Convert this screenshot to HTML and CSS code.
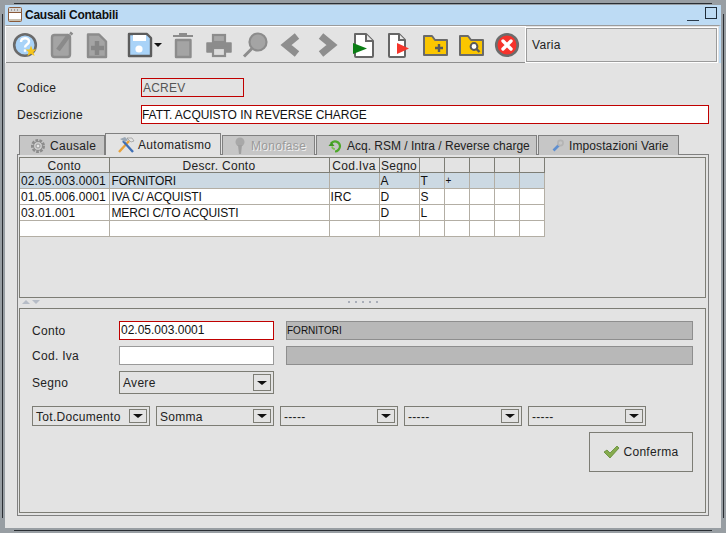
FILE: index.html
```html
<!DOCTYPE html>
<html lang="en">
<head>
    <meta charset="UTF-8">
    <title>Causali Contabili</title>
    <link rel="stylesheet" href="styles.css">
</head>
<body>
<div class="frame">
    <div class="window">
        <div class="titlebar">
            <svg class="title-icon" width="14" height="16" viewBox="0 0 14 16"><rect x="0.5" y="0.5" width="13" height="14" rx="1" fill="#fff" stroke="#8a5a3a"/><rect x="1" y="1" width="12" height="4" fill="#d8d8d8"/><path d="M1 5.5h12" stroke="#8a5a3a"/><path d="M3 3h1M6 3h1M9 3h1" stroke="#666"/><rect x="1" y="12" width="12" height="2" fill="#c8c0b0"/></svg>
            <span class="title-text">Causali Contabili</span>
            <span class="win-min"></span>
            <span class="win-max"></span>
        </div>

        <div class="toolbar">
            <div class="tools">
                <span class="tool">
                    <svg width="28" height="28" viewBox="0 0 28 28"><circle cx="14" cy="14" r="10.8" fill="#a9d3f8" stroke="#6a6a6a" stroke-width="2.6"/><path d="M10 11c0-5 8-5 8-.5 0 3-4 3-4 6" fill="none" stroke="#fff" stroke-width="2.4"/><rect x="12.8" y="18.4" width="2.4" height="2.4" fill="#fff"/><polygon points="20,14.5 21.5,18.5 25.5,18.5 22.4,21 23.6,25 20,22.7 16.4,25 17.6,21 14.5,18.5 18.5,18.5" fill="#f6c51d"/></svg>
                </span>
                <span class="tool">
                    <svg width="28" height="28" viewBox="0 0 28 28"><rect x="5" y="4" width="18" height="22" rx="2.5" fill="#a4a4a4" stroke="#8c8c8c" stroke-width="2.4"/><path d="M11 19l11-15" stroke="#8a8a8a" stroke-width="4.5"/><path d="M23 1.5l2.5 2" stroke="#8a8a8a" stroke-width="2.5"/></svg>
                </span>
                <span class="tool">
                    <svg width="28" height="28" viewBox="0 0 28 28"><path d="M5 3.500h11l7 7v15.500H5z" fill="#a4a4a4" stroke="#8c8c8c" stroke-width="2.4" stroke-linejoin="round"/><path d="M14 10v14M8 17h13" stroke="#868686" stroke-width="4.5"/></svg>
                </span>
                <span class="tool tool-save">
                    <svg width="26" height="26" viewBox="0 0 26 26"><path d="M2 2h18l4 4v18H2z" fill="#a9d3f8" stroke="#5c5c5c" stroke-width="2.4" stroke-linejoin="round"/><rect x="6" y="3" width="13" height="6" fill="#fff"/><circle cx="12" cy="17" r="3.6" fill="#fff"/></svg>
                    <span class="save-caret"></span>
                </span>
                <span class="tool">
                    <svg width="28" height="28" viewBox="0 0 28 28"><path d="M4 5h20" stroke="#8c8c8c" stroke-width="2"/><path d="M10 3.500h8" stroke="#8c8c8c" stroke-width="3"/><path d="M7 9h14.500v17H7z" fill="#a4a4a4" stroke="#8c8c8c" stroke-width="2.4" stroke-linejoin="round"/></svg>
                </span>
                <span class="tool">
                    <svg width="28" height="28" viewBox="0 0 28 28"><rect x="8" y="4" width="12" height="7" fill="#a8a8a8" stroke="#8c8c8c" stroke-width="2.2"/><path d="M2 12h24v9H2z" fill="#8c8c8c" stroke="#8c8c8c" stroke-width="1.5" stroke-linejoin="round"/><rect x="8" y="17" width="12" height="8" fill="#dcdcdc" stroke="#8c8c8c" stroke-width="2.2"/></svg>
                </span>
                <span class="tool">
                    <svg width="28" height="28" viewBox="0 0 28 28"><circle cx="17" cy="11" r="8.5" fill="#a4a4a4" stroke="#8c8c8c" stroke-width="2.2"/><path d="M11 17.500L3 25.500" stroke="#8c8c8c" stroke-width="3"/></svg>
                </span>
                <span class="tool">
                    <svg width="28" height="28" viewBox="0 0 28 28"><path d="M20 5L9 14l11 9" fill="none" stroke="#8e8e8e" stroke-width="7"/></svg>
                </span>
                <span class="tool">
                    <svg width="28" height="28" viewBox="0 0 28 28"><path d="M8 5l11 9-11 9" fill="none" stroke="#8e8e8e" stroke-width="7"/></svg>
                </span>
                <span class="tool">
                    <svg width="28" height="28" viewBox="0 0 28 28"><path d="M6 3h11l7 7v15a1 1 0 0 1-1 1H7a1 1 0 0 1-1-1z" fill="#fff" stroke="#666" stroke-width="2" stroke-linejoin="round"/><path d="M17 3v7h7" fill="#e8e8e8" stroke="#666" stroke-width="2"/><polygon points="4,12 18,17.500 4,23" fill="#0a7d14"/></svg>
                </span>
                <span class="tool">
                    <svg width="28" height="28" viewBox="0 0 28 28"><path d="M4 3h10l6 6v16a1 1 0 0 1-1 1H5a1 1 0 0 1-1-1z" fill="#fff" stroke="#666" stroke-width="2" stroke-linejoin="round"/><path d="M14 3v6h6" fill="#e8e8e8" stroke="#666" stroke-width="2"/><polygon points="12,12 24,17.500 12,23" fill="#f5352b"/></svg>
                </span>
                <span class="tool">
                    <svg width="28" height="28" viewBox="0 0 28 28"><path d="M3 5h8l3 4h12v15H3z" fill="#fbc600" stroke="#6a6a6a" stroke-width="2" stroke-linejoin="round"/><path d="M18 13v8M14 17h8" stroke="#5a5a5a" stroke-width="2.4"/></svg>
                </span>
                <span class="tool">
                    <svg width="28" height="28" viewBox="0 0 28 28"><path d="M3 5h8l3 4h12v15H3z" fill="#fbc600" stroke="#6a6a6a" stroke-width="2" stroke-linejoin="round"/><circle cx="17" cy="15.500" r="3.4" fill="#fff" stroke="#5a5a5a" stroke-width="2"/><path d="M19.500 18l3 3" stroke="#5a5a5a" stroke-width="2.4"/></svg>
                </span>
                <span class="tool">
                    <svg width="28" height="28" viewBox="0 0 28 28"><circle cx="14" cy="14" r="10.8" fill="#f6332b" stroke="#6c6c6c" stroke-width="2.6"/><path d="M10 10l8 8M18 10l-8 8" stroke="#fff" stroke-width="3.4" stroke-linecap="round"/></svg>
                </span>
            </div>
            <div class="status-box">Varia</div>
        </div>

        <div class="form">
            <div class="form-row">
                <label class="form-label">Codice</label>
                <div class="field field-code">ACREV</div>
            </div>
            <div class="form-row">
                <label class="form-label">Descrizione</label>
                <div class="field field-desc">FATT. ACQUISTO IN REVERSE CHARGE</div>
            </div>

            <div class="tabs">
                <div class="tab tab-causale">
                    <svg width="16" height="16" viewBox="0 0 16 16"><circle cx="8" cy="8" r="5.500" fill="none" stroke="#8c8c8c" stroke-width="3" stroke-dasharray="2.6 1.2"/><circle cx="8" cy="8" r="4.500" fill="#ccc" stroke="#8c8c8c"/><circle cx="8" cy="8" r="2" fill="#e8e8e8" stroke="#999"/></svg>
                    Causale
                </div>
                <div class="tab tab-active tab-auto">
                    <svg width="18" height="18" viewBox="0 0 18 18"><path d="M2 16L12 5" stroke="#e8a23a" stroke-width="2.4"/><path d="M16 16L6 5" stroke="#3f6fb5" stroke-width="2.4"/><path d="M3 3l5-2 3 3-3 2z" fill="#9aa7b5"/><path d="M10 2h5l2 3-3 1z" fill="#e4e4e4" stroke="#888" stroke-width=".6"/></svg>
                    Automatismo
                </div>
                <div class="tab tab-disabled tab-mono">
                    <svg width="14" height="18" viewBox="0 0 14 18"><circle cx="7" cy="5" r="4.500" fill="#a8a8a8"/><path d="M5 8h4l-1 9H6z" fill="#a0a0a0"/></svg>
                    Monofase
                </div>
                <div class="tab tab-acq">
                    <svg width="14" height="14" viewBox="0 0 14 14"><path d="M3 4.500A5 5 0 0 1 12 7c0 3-2.500 5.500-5 5.500" fill="none" stroke="#4ea82a" stroke-width="2.2"/><path d="M4 7.500a3 3 0 0 0 3 2.500" fill="none" stroke="#7cc24f" stroke-width="1.6"/><path d="M0.500 7h6L3.500 3z" fill="#3d9a20"/></svg>
                    Acq. RSM / Intra / Reverse charge
                </div>
                <div class="tab tab-imp">
                    <svg width="12" height="13" viewBox="0 0 12 13"><path d="M1.500 11.500L7 6" stroke="#5f8fd0" stroke-width="2.6"/><circle cx="8.500" cy="4" r="2.6" fill="none" stroke="#b4b4b4" stroke-width="1.6"/></svg>
                    Impostazioni Varie
                </div>
            </div>

            <div class="tab-panel">
                <div class="pane-top">
                    <table class="grid">
                        <colgroup>
                            <col class="c-conto"><col class="c-descr"><col class="c-iva"><col class="c-segno">
                            <col class="c-small"><col class="c-small"><col class="c-small"><col class="c-small"><col class="c-small">
                        </colgroup>
                        <thead>
                            <tr><th>Conto</th><th>Descr. Conto</th><th>Cod.Iva</th><th>Segno</th><th></th><th></th><th></th><th></th><th></th></tr>
                        </thead>
                        <tbody>
                            <tr class="selected"><td>02.05.003.0001</td><td>FORNITORI</td><td></td><td>A</td><td>T</td><td class="plus">+</td><td></td><td></td><td></td></tr>
                            <tr><td>01.05.006.0001</td><td>IVA C/ ACQUISTI</td><td>IRC</td><td>D</td><td>S</td><td></td><td></td><td></td><td></td></tr>
                            <tr><td>03.01.001</td><td>MERCI C/TO ACQUISTI</td><td></td><td>D</td><td>L</td><td></td><td></td><td></td><td></td></tr>
                            <tr><td></td><td></td><td></td><td></td><td></td><td></td><td></td><td></td><td></td></tr>
                        </tbody>
                    </table>
                </div>

                <div class="splitter">
                    <span class="split-arrows"><span class="arrow-up"></span><span class="arrow-down"></span></span>
                    <span class="split-dots"></span>
                </div>

                <div class="pane-bottom">
                    <div class="detail">
                        <label class="form-label">Conto</label>
                        <div class="field field-conto">02.05.003.0001</div>
                        <div class="field field-readonly">FORNITORI</div>

                        <label class="form-label">Cod. Iva</label>
                        <div class="field field-plain"></div>
                        <div class="field field-readonly"></div>

                        <label class="form-label">Segno</label>
                        <div class="combo combo-tall">Avere<span class="combo-btn"></span></div>
                    </div>

                    <div class="combo-row">
                        <div class="combo">Tot.Documento<span class="combo-btn"></span></div>
                        <div class="combo">Somma<span class="combo-btn"></span></div>
                        <div class="combo">-----<span class="combo-btn"></span></div>
                        <div class="combo">-----<span class="combo-btn"></span></div>
                        <div class="combo">-----<span class="combo-btn"></span></div>
                    </div>

                    <div class="actions">
                        <button class="btn-confirm">
                            <svg width="17" height="14" viewBox="0 0 17 14"><path d="M1 7l3-2 3 3 7-7 2 2-9 10z" fill="#86ab4e" stroke="#5f8a34" stroke-width=".8" stroke-linejoin="round"/></svg>
                            Conferma
                        </button>
                    </div>
                </div>
            </div>
        </div>
    </div>
</div>
</body>
</html>
```

FILE: styles.css
```css
* {
    margin: 0;
    padding: 0;
    box-sizing: border-box;
}

html, body {
    width: 726px;
    height: 533px;
    overflow: hidden;
}

body {
    font-family: "Liberation Sans", Arial, sans-serif;
    font-size: 12px;
    letter-spacing: 0.3px;
    color: #222;
}

.frame {
    width: 726px;
    height: 533px;
    padding: 5px;
    background-color: #989ea3;
    background-image:
        linear-gradient(#2a2e33, #2a2e33),
        linear-gradient(#2a2e33, #2a2e33),
        linear-gradient(#2a2e33, #2a2e33),
        linear-gradient(#2a2e33, #2a2e33);
    background-repeat: no-repeat;
    background-size: 698px 1px, 698px 1px, 1px 504px, 1px 504px;
    background-position: 14px 3px, 14px 530px, 2px 14px, 723px 14px;
}

.window {
    height: 100%;
    display: flex;
    flex-direction: column;
    background: #e3e3e3;
}

.titlebar {
    height: 20px;
    flex: none;
    background: #bddbf4;
    display: flex;
    align-items: center;
    padding: 0 4px 0 3px;
}

.title-icon {
    margin-right: 3px;
    flex: none;
}

.title-text {
    font-weight: bold;
    letter-spacing: -0.25px;
    color: #111;
    flex: 1;
}

.win-min {
    width: 12px;
    height: 1px;
    background: #2a3a4a;
    margin: 10px 6px 0 0;
}

.win-max {
    width: 12px;
    height: 12px;
    border: 1px solid #1f2d3a;
    margin-bottom: 5px;
}

.toolbar {
    height: 38px;
    flex: none;
    display: flex;
    border-top: 1px solid #9b9b9b;
    border-left: 1px solid #fff;
    border-right: 2px solid #bddbf4;
}

.tools {
    flex: 1;
    display: flex;
    align-items: center;
    padding-left: 1px;
    border-top: 1px solid #fff;
    border-bottom: 1px solid #8f8f8f;
}

.tool {
    width: 36px;
    height: 30px;
    flex: none;
    display: flex;
    align-items: center;
    justify-content: center;
}

.tool-save {
    width: 50px;
    justify-content: flex-start;
    padding-left: 12px;
}

.save-caret {
    width: 0;
    height: 0;
    margin-left: 1px;
    border-left: 4px solid transparent;
    border-right: 4px solid transparent;
    border-top: 4px solid #111;
}

.status-box {
    width: 191px;
    height: 34px;
    flex: none;
    background: #e3e3e3;
    border: 1px solid #9b9b9b;
    outline: 1px solid #fff;
    margin: 2px 2px 0 0;
    padding: 9px 0 0 5px;
}

.form {
    flex: 1;
    padding: 15px 0 0 12px;
}

.form-row {
    display: flex;
    align-items: center;
    height: 19px;
    margin-bottom: 8px;
}

.form-row .form-label {
    width: 124px;
}

.field {
    height: 19px;
    line-height: 17px;
    padding-left: 1px;
    letter-spacing: 0;
    border: 1px solid #c00000;
}

.field-code {
    width: 103px;
    color: #555;
    letter-spacing: 0.2px;
    padding-top: 1px;
}

.field-desc {
    width: 568px;
    background: #fff;
    color: #111;
    padding: 1px 0 0;
    letter-spacing: -0.05px;
}

.tabs {
    height: 22px;
    margin-top: 9px;
    margin-bottom: -1px;
    padding-left: 2px;
    display: flex;
    align-items: flex-end;
    position: relative;
}

.tab {
    height: 20px;
    display: flex;
    align-items: center;
    gap: 4px;
    background: #c6c6c6;
    border: 1px solid #808080;
    border-bottom: none;
    padding-left: 10px;
    margin-right: 1px;
    white-space: nowrap;
}

.tab-active {
    height: 22px;
    background: #e3e3e3;
    position: relative;
}

.tab-disabled {
    color: #9a9a9a;
    text-shadow: 1px 1px 0 #f2f2f2;
}

.tab-causale { width: 86px; margin-right: 0; }
.tab-auto { width: 116px; padding-left: 11px; gap: 3px; }
.tab-mono { width: 93px; }
.tab-acq { width: 221px; padding-left: 11px; gap: 5px; letter-spacing: 0; }
.tab-imp { width: 141px; padding-left: 13px; gap: 5px; letter-spacing: 0.1px; }

.tab-panel {
    width: 692px;
    height: 362px;
    border: 1px solid #808080;
    padding: 2px 2px 2px 1px;
    display: flex;
    flex-direction: column;
}

.pane-top {
    height: 141px;
    flex: none;
    border: 1px solid #7d7d75;
}

.grid {
    border-collapse: collapse;
    table-layout: fixed;
    width: 524px;
    color: #111;
    letter-spacing: 0.1px;
}

.c-conto { width: 89px; }
.c-descr { width: 220px; }
.c-iva { width: 50px; }
.c-segno { width: 40px; }
.c-small { width: 25px; }

.grid th {
    height: 14px;
    font-weight: normal;
    text-align: center;
    background: #e3e3e3;
    border-right: 1px solid #7d7d75;
    border-bottom: 1px solid #7d7d75;
    letter-spacing: 0.3px;
    color: #222;
    overflow: hidden;
    white-space: nowrap;
    padding-top: 2px;
    line-height: 12px;
}

.grid td {
    height: 16px;
    background: #fff;
    border-right: 1px solid #b3aea4;
    border-bottom: 1px solid #b3aea4;
    padding: 1px 0 0 1px;
    overflow: hidden;
    white-space: nowrap;
    line-height: 14px;
}

.grid td:nth-child(2) {
    padding-left: 2px;
    letter-spacing: -0.15px;
}

.grid .selected td {
    background: #ccd9e3;
}

.grid .plus {
    font-size: 10px;
}

.splitter {
    height: 10px;
    flex: none;
    display: flex;
    justify-content: space-between;
    padding: 2px 0 0 3px;
}

.split-arrows {
    display: flex;
    gap: 2px;
}

.arrow-up,
.arrow-down {
    width: 0;
    height: 0;
    border-left: 4px solid transparent;
    border-right: 4px solid transparent;
}

.arrow-up { border-bottom: 4px solid #b6bcc6; }
.arrow-down { border-top: 4px solid #b6bcc6; }

.split-dots {
    width: 30px;
    height: 2px;
    margin: 1px 328px 0 0;
    background: repeating-linear-gradient(90deg, #a9aeb8 0 2px, transparent 2px 7px);
}

.pane-bottom {
    flex: 1;
    border: 1px solid #7d7d75;
    padding: 12px 12px 0 12px;
}

.detail {
    display: grid;
    grid-template-columns: 87px 155px 419px;
    grid-template-rows: 19px 19px 23px;
    row-gap: 6px;
    align-items: center;
}

.field-conto {
    background: #fff;
    color: #111;
    border-color: #c00000;
}

.field-plain {
    background: #fff;
    border-color: #9a9a9a;
}

.field-readonly {
    margin-left: 12px;
    background: #b8b8b8;
    border-color: #8e8e8e;
    color: #111;
    font-size: 10px;
    padding-left: 0;
    letter-spacing: 0;
}

.combo {
    height: 20px;
    display: flex;
    align-items: center;
    justify-content: space-between;
    border: 1px solid #7d7d75;
    padding: 2px 2px 0 3px;
    color: #222;
}

.combo-tall {
    height: 23px;
    padding-top: 0;
}

.combo-btn {
    width: 18px;
    height: 14px;
    flex: none;
    margin-top: -2px;
    border: 1px solid #7d7d75;
    display: flex;
    align-items: center;
    justify-content: center;
}

.combo-tall .combo-btn {
    height: 17px;
    margin-top: 0;
}

.combo-btn::after {
    content: "";
    border-left: 5px solid transparent;
    border-right: 5px solid transparent;
    border-top: 4px solid #111;
}

.combo-row {
    display: grid;
    grid-template-columns: repeat(5, 118px);
    column-gap: 6px;
    margin-top: 12px;
}

.actions {
    display: flex;
    justify-content: flex-end;
    margin-top: 6px;
}

.btn-confirm {
    width: 104px;
    height: 40px;
    background: #e3e3e3;
    border: 1px solid #7d7d75;
    font: inherit;
    letter-spacing: 0.3px;
    color: #222;
    display: flex;
    align-items: center;
    justify-content: center;
    gap: 3px;
}
```
